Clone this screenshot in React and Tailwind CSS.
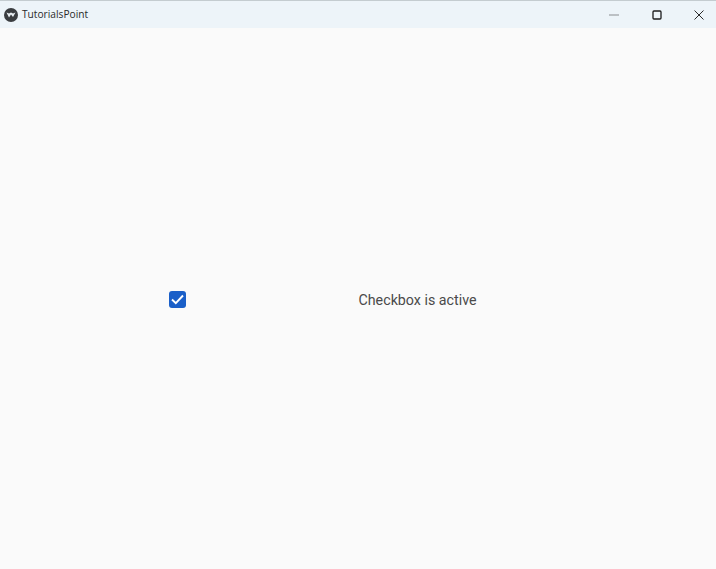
export default function App() {
  return (
    <div className="flex h-[569px] w-[716px] flex-col overflow-hidden bg-[#fafafa] font-['Roboto',sans-serif]">
      <header className="flex h-[28px] shrink-0 items-center border-t border-[#c4ccd0] bg-[#edf4f9]">
        <div className="ml-[4px] flex h-[14px] w-[14px] items-center justify-center rounded-full bg-[#3a3d40]">
          <svg width="10" height="8" viewBox="0 0 10 8" fill="none">
            <path d="M0.5 1.5 L3 6.5 L5 3.5 L7 6 L9.5 1.5 L7 2.5 L5 1.5 L3 2.5 Z" fill="#e8eef2" />
          </svg>
        </div>
        <span className="ml-[4px] font-['Open_Sans',sans-serif] text-[10.2px] text-[#2a2a2a]">TutorialsPoint</span>
        <div className="-mr-[4px] ml-auto flex items-center">
          <button className="mr-px flex h-[27px] w-[42px] items-center justify-center">
            <svg width="10" height="10" viewBox="0 0 10 10" fill="none">
              <path d="M0 5H10" stroke="#8a8d90" strokeWidth="1" />
            </svg>
          </button>
          <button className="flex h-[27px] w-[42px] items-center justify-center">
            <svg width="10" height="10" viewBox="0 0 10 10" fill="none">
              <rect x="1" y="1" width="8" height="8" rx="1" stroke="#1c1c1c" strokeWidth="1.3" />
            </svg>
          </button>
          <button className="flex h-[27px] w-[42px] items-center justify-center">
            <svg width="10" height="10" viewBox="0 0 10 10" fill="none">
              <path d="M0.5 0.5L9.5 9.5M9.5 0.5L0.5 9.5" stroke="#2a2a2a" strokeWidth="1" />
            </svg>
          </button>
        </div>
      </header>
      <main className="flex flex-1 items-center pl-[169px] pt-[4px]">
        <span className="mb-[2px] flex h-[17px] w-[17px] items-center justify-center rounded-[3px] bg-[#1a5fc8]">
          <svg width="15" height="13" viewBox="0 0 15 13" fill="none">
            <path d="M2 6.5L5.8 10.2L13 2.5" stroke="#ffffff" strokeWidth="1.9" />
          </svg>
        </span>
        <p className="ml-[172.5px] text-[14.25px] text-[#4a4a4a]">Checkbox is active</p>
      </main>
    </div>
  );
}
